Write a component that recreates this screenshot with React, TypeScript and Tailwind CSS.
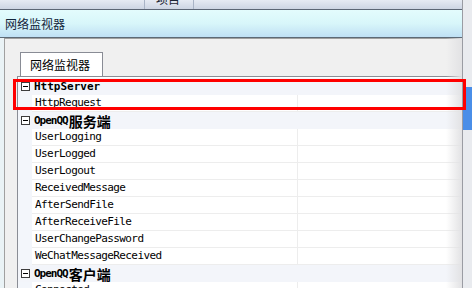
const mono = "font-['DejaVu_Sans_Mono','Noto_Sans_CJK_SC',monospace]";
const cjk = "font-['Noto_Sans_CJK_SC','Noto_Sans',sans-serif]";

const sections = [
  { latin: "HttpServer", zh: "", tight: false, items: ["HttpRequest"] },
  {
    latin: "OpenQQ",
    zh: "服务端",
    tight: true,
    items: [
      "UserLogging",
      "UserLogged",
      "UserLogout",
      "ReceivedMessage",
      "AfterSendFile",
      "AfterReceiveFile",
      "UserChangePassword",
      "WeChatMessageReceived",
    ],
  },
  { latin: "OpenQQ", zh: "客户端", tight: true, items: ["Connected"] },
];

function MinusBox() {
  return (
    <svg width="9" height="9" viewBox="0 0 9 9" className="shrink-0">
      <rect x="0.5" y="0.5" width="8" height="8" fill="#ffffff" stroke="#3c3c3c" />
      <line x1="2" y1="4.5" x2="7" y2="4.5" stroke="#000000" />
    </svg>
  );
}

function CategoryRow({ latin, zh, tight }: { latin: string; zh: string; tight: boolean }) {
  return (
    <div className="h-[17px] shrink-0 bg-[#f3f5fa] flex items-center pl-[3px]">
      <MinusBox />
      <span className={`ml-[4px] flex items-center font-bold text-black leading-none ${mono}`}>
        <span className={tight ? "text-[11px] tracking-[-1px]" : "text-[11px] tracking-[0px]"}>{latin}</span>
        {zh && <span className={`text-[14px] ml-[1px] ${cjk}`}>{zh}</span>}
      </span>
    </div>
  );
}

function ItemRow({ name }: { name: string }) {
  return (
    <div className="h-[17px] shrink-0 flex">
      <div className="w-[14px] bg-[#f3f6fb]" />
      <div
        className={`w-[266px] border-r border-b border-[#ededed] bg-white pl-[3px] pb-[2px] flex items-center text-[11px] tracking-[-0.6px] text-black leading-none ${mono}`}
      >
        {name}
      </div>
      <div className="flex-1 border-b border-[#ededed] bg-white" />
    </div>
  );
}

export default function App() {
  return (
    <div className={`relative w-[472px] h-[288px] overflow-hidden flex bg-[#f0f0f0] ${cjk}`}>
      <div className="flex-1 min-w-0 flex flex-col">
        {/* header strip, mostly cut off */}
        <div className="h-[10px] shrink-0 border-b border-[#5c6675] bg-gradient-to-b from-[#e6ebf3] to-[#cdd5e3] flex overflow-hidden">
          <div className="w-[145px] border-r border-[#a9b4c6]" />
          <div className="w-[49px] border-r border-[#a9b4c6] pl-[11px]">
            <div className="-mt-[7px] text-[12px] leading-[12px] text-[#1c2533]">项目</div>
          </div>
          <div className="flex-1" />
        </div>

        {/* title bar */}
        <div className="h-[28px] shrink-0 border-b border-[#5d6a76] bg-gradient-to-b from-[#e3fcfd] via-[#d8f6fa] to-[#bfe0f4] pl-[5px] flex items-center text-[12px] text-[#13243a]">
          网络监视器
        </div>

        {/* body */}
        <div className="relative flex-1 flex min-h-0">
          <div className="w-[4px] bg-[#eaf3f6]" />
          <div className="flex-1 border-l border-t border-[#a0a0a0] bg-[#f0f0f0] pl-[12px] pt-[13px] flex flex-col min-w-0 min-h-0">
            <div className="shrink-0 ml-[3px] w-[83px] h-[24px] border border-b-0 border-[#898c95] bg-white flex items-center pl-[9px] text-[12px] text-black">
              网络监视器
            </div>
            <div className="flex-1 min-h-0 overflow-hidden border-l border-t border-[#8a8d95] bg-white pt-[1px]">
              {sections.map((s) => (
                <div key={s.latin + s.zh}>
                  <CategoryRow latin={s.latin} zh={s.zh} tight={s.tight} />
                  {s.items.map((n) => (
                    <ItemRow key={n} name={n} />
                  ))}
                </div>
              ))}
            </div>
          </div>
          {/* right edge shade */}
          <div className="absolute right-0 top-0 bottom-0 w-[16px] bg-gradient-to-r from-transparent to-[#e2e2e4]" />
        </div>
      </div>

      {/* right strip */}
      <div className="w-[10px] shrink-0 border-l border-[#9a9ca3] bg-[#e9ebef] flex flex-col">
        <div className="h-[87px]" />
        <div className="h-[43px] bg-[#4a8ee8]" />
      </div>

      {/* highlight */}
      <div className="absolute left-[13px] top-[79px] w-[453px] h-[31px] border-[3px] border-[#ff0000]" />
    </div>
  );
}
